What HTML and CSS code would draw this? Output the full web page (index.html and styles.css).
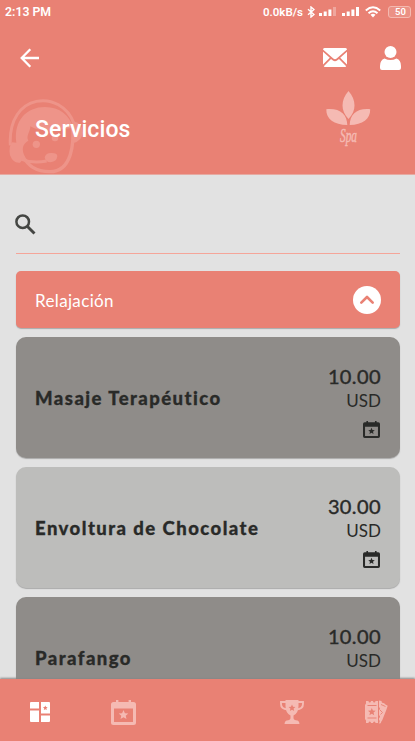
FILE: index.html
```html
<!DOCTYPE html>
<html lang="es">
<head>
<meta charset="utf-8">
<title>Servicios</title>
<link rel="stylesheet" href="styles.css">
</head>
<body>
<svg width="0" height="0" class="defs">
  <defs>
    <path id="star" d="M0-5 1.4-1.8 4.8-1.5 2.2.7 3 4.1 0 2.3-3 4.1-2.2.7-4.8-1.5-1.4-1.8Z"/>
    <symbol id="calendar" viewBox="0 0 25 25">
      <path fill="currentColor" fill-rule="evenodd" d="M5 0h2.400v2h10.200V0H20v2h2.500Q25 2 25 4.500V22.500Q25 25 22.500 25H2.500Q0 25 0 22.500V4.500Q0 2 2.500 2H5ZM3 8.500V22h19V8.500Z"/>
      <use href="#star" fill="currentColor" x="12.500" y="15"/>
    </symbol>
  </defs>
</svg>
<div class="screen">
  <header class="header">
    <div class="status">
      <span class="time">2:13 PM</span>
      <div class="indicators">
        <span class="rate">0.0kB/s</span>
        <svg class="bluetooth" width="8" height="12" viewBox="0 0 8 12"><path fill="none" stroke="#fff" stroke-width="1.400" d="M1 3.200 7 8.500 4 11V1L7 3.500 1 8.800"/></svg>
        <svg class="signal" width="17" height="9" viewBox="0 0 17 9"><path fill="#fff" d="M0 6h3v3H0ZM4.700 4.500h3V9h-3ZM9.400 2.500h3V9h-3Z"/><path fill="#fff" opacity=".3" d="M14 0h3v9h-3Z"/></svg>
        <svg class="signal" width="17" height="9" viewBox="0 0 17 9"><path fill="#fff" d="M0 6h3v3H0ZM4.700 4.500h3V9h-3ZM9.400 2.500h3V9h-3ZM14 0h3v9h-3Z"/></svg>
        <svg class="wifi" width="16" height="12" viewBox="0 0 16 12"><path fill="none" stroke="#fff" stroke-width="1.900" d="M.8 4.500Q8-1.800 15.200 4.500M3.500 7.300Q8 3.300 12.500 7.300"/><path fill="#fff" d="M5.500 8.800Q8 6.900 10.500 8.800L8 11.600Z"/></svg>
        <span class="battery">50</span>
      </div>
    </div>
    <nav class="toolbar">
      <svg class="back" width="20" height="20" viewBox="0 0 20 20"><path fill="none" stroke="#fff" stroke-width="2.300" d="M19 10H2M10.300 1.200 1.700 10l8.600 8.800"/></svg>
      <svg class="mail" width="24" height="19" viewBox="0 0 24 19"><path fill="#fff" d="M1.500 0h21Q24 0 24 1.500L13.700 10.500Q12 12 10.300 10.500L0 1.500Q0 0 1.500 0ZM0 3.700 6.800 9.800 0 16.500ZM24 3.700V16.500L17.200 9.800ZM8 10.900 9.600 12.300Q12 14.200 14.400 12.300L16 10.900 23.200 18.200Q23 19 22 19H2Q1 19 .8 18.200Z"/></svg>
      <svg class="user" width="21" height="24" viewBox="0 0 21 24"><circle cx="10.500" cy="6" r="6" fill="#fff"/><path fill="#fff" d="M4.500 12.500Q10.500 15.500 16.500 12.500 21 14 21 20v2q0 2-2 2H2q-2 0-2-2v-2q0-6 4.500-7.500Z"/></svg>
    </nav>
    <div class="hero">
      <svg class="agent" width="76" height="75" viewBox="24 26 228 225">
        <path fill="none" stroke="#ee9489" stroke-width="9" d="M31 165C22 5 185-5 222 100"/>
        <path fill="none" stroke="#ee9489" stroke-width="10" d="M217 105C223 160 215 244 150 244 105 244 85 225 68 198"/>
        <path fill="#ee9489" d="M49 157C40 90 80 50 135 50 180 50 208 75 220 112 165 120 125 127 91 108 91 125 77 137 85 151 65 162 65 180 75 200L60 217Q40 220 30 195 25 166 37 156Z"/>
        <path fill="#ee9489" d="M220 93Q249 100 248 127 247 151 218 159Z"/>
        <circle cx="109" cy="162" r="11" fill="#ee9489"/><circle cx="165" cy="143" r="10" fill="#ee9489"/>
        <path fill="none" stroke="#ee9489" stroke-width="9" d="M65 207Q98 220 140 212"/>
        <path fill="#ee9489" d="M134 201Q138 187 155 188 172 188 172 198 170 214 152 216 136 216 134 201Z"/>
      </svg>
      <h1>Servicios</h1>
      <svg class="spa" width="46" height="58" viewBox="0 0 46 58">
        <g fill="#f5bab3"><path d="M22.500 0C14.500 9 14.500 20 22.500 28 30.500 20 30.500 9 22.500 0ZM.3 18.200C14 17 21 23 21.300 34 8 33.700 0 28 .3 18.200ZM44.200 18.200C44.500 28 36.500 33.700 23.700 34 24 23 31 17 44.200 18.200Z"/>
        <text x="14" y="50.500" textLength="17" lengthAdjust="spacingAndGlyphs">Spa</text></g>
      </svg>
    </div>
  </header>
  <main class="content">
    <div class="search"><svg width="21" height="21" viewBox="0 0 21 21"><circle cx="7.700" cy="7.700" r="6.300" fill="none" stroke="#444643" stroke-width="2.500"/><path stroke="#444643" stroke-width="2.900" d="m12.200 12.200 7.300 7.300"/></svg></div>
    <section class="category"><span>Relajación</span>
      <svg width="28" height="28" viewBox="0 0 28 28"><circle cx="14" cy="14" r="14" fill="#fff"/><path fill="none" stroke="#e98174" stroke-width="2.600" stroke-linecap="round" stroke-linejoin="round" d="m8.300 16.700 5.700-5.700 5.700 5.700"/></svg>
    </section>
    <article class="card"><h2>Masaje Terapéutico</h2><div class="price"><b>10.00</b><span>USD</span><svg><use href="#calendar"/></svg></div></article>
    <article class="card light"><h2>Envoltura de Chocolate</h2><div class="price"><b>30.00</b><span>USD</span><svg><use href="#calendar"/></svg></div></article>
    <article class="card"><h2>Parafango</h2><div class="price"><b>10.00</b><span>USD</span><svg><use href="#calendar"/></svg></div></article>
  </main>
  <nav class="tabs">
    <div class="tab active"><svg width="20" height="20" viewBox="0 0 20 20"><path fill="#fff" d="M1 0H9V6.500H0V1Q0 0 1 0ZM0 8.500H9V20H1Q0 20 0 19ZM11 0h8q1 0 1 1V11.500H11ZM11 13.500h9V19q0 1-1 1H11Z"/><use href="#star" fill="#e98174" transform="translate(15.300 6) scale(.5)"/></svg></div>
    <div class="tab"><svg width="25" height="25"><use href="#calendar"/></svg></div>
    <div class="tab"></div>
    <div class="tab"><svg width="24" height="24" viewBox="0 0 24 24"><path fill="currentColor" d="M5.500 0h13v6q0 7-5 9.500V18q0 2 4 2.500 2 .5 2 3.500h-15q0-3 2-3.500 4-.5 4-2.500V15.500q-5-2.500-5-9.500Z"/><path fill="none" stroke="currentColor" stroke-width="1.900" d="M6.500 2H1V4Q1 9 7.500 9.500M17.500 2H23V4Q23 9 16.500 9.500"/><use href="#star" fill="#e98174" transform="translate(12 8) scale(.72)"/></svg></div>
    <div class="tab"><svg width="23" height="24" viewBox="0 0 23 24"><path fill="currentColor" d="M1 1h2.500q0 1.600 1.200 1.600T6 1h2q0 1.600 1.200 1.600T10.500 1H13V23h-2.500q0-1.500-1.200-1.500T8 23H6q0-1.500-1.300-1.500T3.500 23H1v-2.500L0 19V5l1-1.500Z"/><path stroke="#e98174" stroke-width="1" d="M2.500 5.500h9M2.500 18h9"/><use href="#star" fill="#e98174" transform="translate(6.800 12) scale(.8)"/><path fill="currentColor" d="m14 .5 2.500.5q0 2 1.500 2t2 1.300l2.700 1.500-1 3-.5 1.500-1 2.500-1 2.500-1 2.500-1 2.500q-1 1-1.500 3l-2 .3Q15.500 21 14 20V18q2-1 0-3V10q2-1 0-3Z"/><path fill="none" stroke="#e98174" stroke-width=".9" d="m16 4.500 4.500 2M15 10l2.500 2.500-2 2"/></svg></div>
  </nav>
</div>
</body>
</html>
```
FILE: styles.css
```css
* { box-sizing: border-box; }
body { margin: 0; font-family: Lato, sans-serif; color: #292a28; }
.defs { position: absolute; }
svg { display: block; flex: none; }
.screen { width: 415px; height: 741px; overflow: hidden; display: flex; flex-direction: column; background: #e2e2e2; }
.header { flex: none; height: 175px; background: #e98174; color: #fff; border-bottom: 1px solid #e6aaa2; font-family: Roboto, sans-serif; }
.status { height: 24px; padding: 0 4px 1px 5px; display: flex; align-items: center; justify-content: space-between; font-weight: 600; font-size: 12.3px; }
.indicators { display: flex; align-items: center; }
.rate { font-size: 11.5px; font-weight: 600; }
.bluetooth { margin-left: 4px; }
.signal { margin: 0 0 0 6px; }
.bluetooth + .signal { margin-left: 4px; }
.wifi { margin-left: 6px; }
.battery { width: 23px; height: 12px; margin-left: 7px; border: 1px solid #f4b9b0; border-radius: 3px; font-size: 9.5px; line-height: 10px; text-align: center; background: #eb9185; padding-left: 2px; }
.toolbar { height: 67px; padding: 0 14px 0 20px; display: flex; align-items: center; }
.mail { margin-left: auto; }
.user { margin-left: 33px; }
.hero { position: relative; height: 83px; padding: 0 43px 0 35px; display: flex; justify-content: space-between; }
.agent { position: absolute; left: 8px; top: 8px; }
h1 { position: relative; margin: 25px 0 0; font-size: 23px; line-height: 28px; font-weight: 500; letter-spacing: .1px; }
.spa { font-family: "Liberation Serif", serif; font-style: italic; font-size: 18px; }
.spa text { stroke: #f5bab3; stroke-width: .5; }
.content { flex: 1; min-height: 0; overflow: hidden; padding: 0 15px 0 16px; }
.search { height: 79px; padding-top: 39px; border-bottom: 1px solid #f5a599; }
.search svg { margin-left: -1px; }
.category { height: 57px; margin-top: 17px; padding: 0 19px; display: flex; align-items: center; justify-content: space-between; background: #e98174; color: #fff; border-radius: 5px; box-shadow: 0 1px 1px #aaa; font-size: 17px; letter-spacing: .35px; }
.category span { padding-top: 2px; }
.card { height: 121px; margin-top: 9px; padding: 26px 19px 0; display: flex; justify-content: space-between; background: #8f8c89; border-radius: 10px; box-shadow: 0 1px 1px #aaa; }
.light { background: #bdbdbb; }
h2 { margin: 23px 0 0; font-size: 18.5px; line-height: 25px; font-weight: 900; letter-spacing: 1.45px; white-space: nowrap; -webkit-text-stroke: .3px; }
.price { display: flex; flex-direction: column; align-items: flex-end; }
.price b { font-size: 20px; line-height: 26px; font-weight: 400; letter-spacing: .4px; -webkit-text-stroke: .4px; }
.price span { margin-top: 1px; font-size: 17px; line-height: 22px; }
.price svg { width: 17px; height: 17px; margin: 9px 1px 0 0; }
.tabs { position: relative; flex: none; height: 62px; display: flex; background: #e98174; color: #f5bab3; box-shadow: 0 -1px 2px #888; padding: 4px 0 0; }
.tab { width: 84px; height: 58px; display: flex; align-items: center; justify-content: center; flex: none; }
.tab:first-child { padding-right: 5px; }
.tab:nth-child(2) { margin: 0 1px 0 -3px; }
```
